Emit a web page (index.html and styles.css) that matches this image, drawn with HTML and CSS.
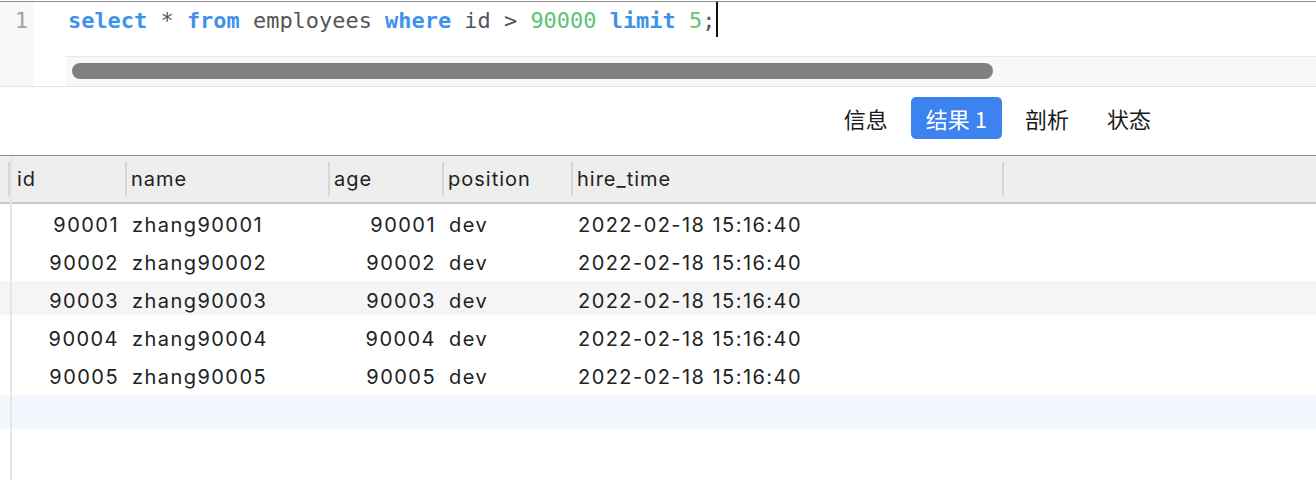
FILE: index.html
```html
<!DOCTYPE html>
<html lang="zh-CN">
<head>
<meta charset="utf-8">
<title>Query</title>
<link rel="stylesheet" href="styles.css">
</head>
<body>
<div class="app">
  <section class="editor">
    <div class="gutter"><span class="lineno">1</span></div>
    <div class="code-area">
      <div class="code-line"><span class="kw">select</span> <span class="op">*</span> <span class="kw">from</span> <span class="id">employees</span> <span class="kw">where</span> <span class="id">id</span> <span class="op">&gt;</span> <span class="num">90000</span> <span class="kw">limit</span> <span class="num">5</span><span class="op">;</span><span class="caret"></span></div>
      <div class="hscroll"><div class="thumb"></div></div>
    </div>
  </section>

  <nav class="tabs">
    <button class="tab">信息</button>
    <button class="tab active">结果 1</button>
    <button class="tab">剖析</button>
    <button class="tab">状态</button>
  </nav>

  <section class="grid">
    <div class="grid-head">
      <div class="hcell marker"></div>
      <div class="hcell first">id</div>
      <div class="hcell">name</div>
      <div class="hcell">age</div>
      <div class="hcell">position</div>
      <div class="hcell">hire_time</div>
      <div class="hcell"></div>
    </div>
    <div class="grid-body">
      <div class="row">
        <div class="cell"></div><div class="cell num">90001</div><div class="cell">zhang90001</div><div class="cell num">90001</div><div class="cell">dev</div><div class="cell">2022-02-18 15:16:40</div><div class="cell"></div>
      </div>
      <div class="row">
        <div class="cell"></div><div class="cell num">90002</div><div class="cell">zhang90002</div><div class="cell num">90002</div><div class="cell">dev</div><div class="cell">2022-02-18 15:16:40</div><div class="cell"></div>
      </div>
      <div class="row striped">
        <div class="cell"></div><div class="cell num">90003</div><div class="cell">zhang90003</div><div class="cell num">90003</div><div class="cell">dev</div><div class="cell">2022-02-18 15:16:40</div><div class="cell"></div>
      </div>
      <div class="row">
        <div class="cell"></div><div class="cell num">90004</div><div class="cell">zhang90004</div><div class="cell num">90004</div><div class="cell">dev</div><div class="cell">2022-02-18 15:16:40</div><div class="cell"></div>
      </div>
      <div class="row">
        <div class="cell"></div><div class="cell num">90005</div><div class="cell">zhang90005</div><div class="cell num">90005</div><div class="cell">dev</div><div class="cell">2022-02-18 15:16:40</div><div class="cell"></div>
      </div>
      <div class="row new-row">
        <div class="cell"></div><div class="cell"></div><div class="cell"></div><div class="cell"></div><div class="cell"></div><div class="cell"></div><div class="cell"></div>
      </div>
    </div>
  </section>
</div>
</body>
</html>
```

FILE: styles.css
```css
* { box-sizing: border-box; }

html, body {
  margin: 0;
  padding: 0;
  background: #ffffff;
  height: 480px;
  overflow: hidden;
}

body {
  font-family: "Inter", "Liberation Sans", "Noto Sans CJK SC", sans-serif;
  color: #222222;
}

.app {
  padding-top: 1px;
}

/* ---------- editor ---------- */
.editor {
  display: flex;
  height: 86px;
  border-top: 1px solid #8c8c8c;
  border-bottom: 1px solid #e3e3e3;
}

.gutter {
  width: 33px;
  background: #f7f7f7;
  text-align: right;
  padding-right: 5px;
  font-family: "DejaVu Sans Mono", monospace;
  font-size: 21.5px;
  line-height: 37px;
  color: #a0a0a0;
}

.code-area {
  flex: 1;
  display: flex;
  flex-direction: column;
}

.code-line {
  font-family: "DejaVu Sans Mono", monospace;
  font-size: 21.95px;
  line-height: 37px;
  padding-left: 35px;
  color: #555555;
  white-space: pre;
}

.kw { color: #3f92ea; font-weight: bold; }
.num { color: #5cc276; }
.op, .id { color: #555555; }

.caret {
  display: inline-block;
  width: 2px;
  height: 35px;
  background: #111111;
  vertical-align: top;
  margin-left: 1px;
}

.hscroll {
  margin-top: auto;
  margin-left: 33px;
  height: 30px;
  background: #f8f8f8;
  border-top: 1px solid #e8e8e8;
  padding: 6px 0 0 6px;
}

.thumb {
  width: 921px;
  height: 16px;
  border-radius: 8px;
  background: #808080;
}

/* ---------- tabs ---------- */
.tabs {
  height: 68px;
  display: flex;
  justify-content: flex-end;
  align-items: flex-start;
  gap: 8px;
  padding: 10px 150px 0 0;
}

.tab {
  font-family: "Noto Sans CJK SC", sans-serif;
  font-size: 22px;
  line-height: 42px;
  height: 42px;
  padding: 0 15px;
  border: 0;
  border-radius: 5px;
  background: transparent;
  color: #1a1a1a;
}

.tab.active {
  background: #3c83ef;
  color: #ffffff;
}

/* ---------- grid ---------- */
.grid {
  position: relative;
  border-top: 1px solid #8c8c8c;
  font-size: 20px;
  height: 325px;
}

.grid::before {
  content: "";
  position: absolute;
  left: 10px;
  top: 0;
  bottom: 0;
  width: 2px;
  background: #e6e6e6;
}

.grid-head,
.row {
  display: grid;
  grid-template-columns: 8px 117px 203px 114px 129px 431px 1fr;
}

.grid-head {
  height: 48px;
  background: #eeeeee;
  border-bottom: 2px solid #c8c8c8;
  padding: 6px 0;
  letter-spacing: 1px;
}

.hcell {
  height: 34px;
  line-height: 34px;
  border-left: 2px solid #d6d6d6;
  padding-left: 4px;
  color: #222222;
}

.hcell.marker {
  border-left: 0;
}

.hcell.first {
  padding-left: 7px;
}

.row {
  height: 38px;
  line-height: 38px;
  letter-spacing: 1.45px;
}

.row.striped {
  background: linear-gradient(to bottom, transparent 1px, #f5f5f5 1px, #f5f5f5 35px, transparent 35px);
}

.row.new-row {
  background: linear-gradient(to bottom, transparent 1px, #f3f7fd 1px, #f3f7fd 35px, transparent 35px);
}

.cell {
  padding: 2px 7px 0;
  white-space: nowrap;
  overflow: hidden;
}

.cell.num {
  text-align: right;
  padding-right: 6px;
  color: #222222;
}
```
